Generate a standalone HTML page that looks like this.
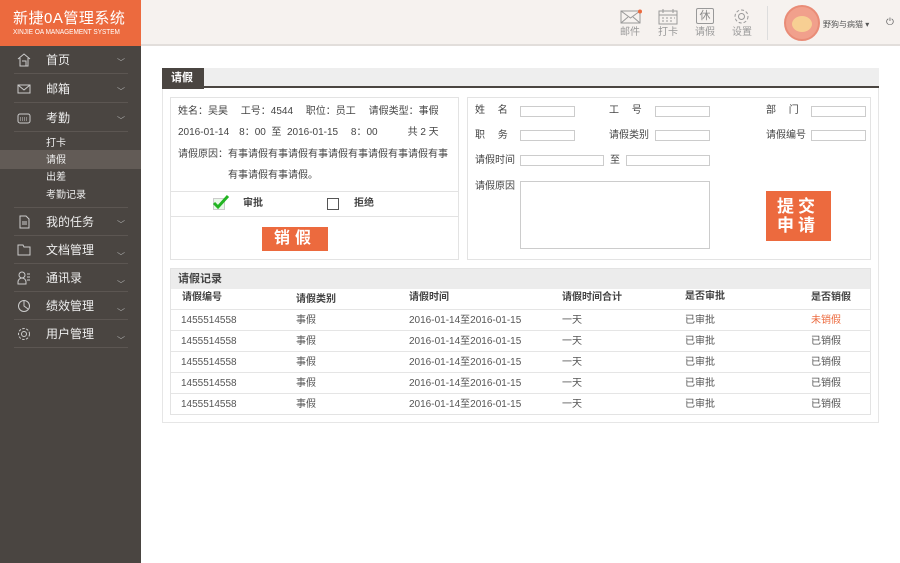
<!DOCTYPE html>
<html><head><meta charset="utf-8"><style>
*{margin:0;padding:0;box-sizing:border-box}
body{width:900px;height:563px;overflow:hidden;font-family:"Liberation Sans","Noto Sans CJK SC",sans-serif;font-size:10px;line-height:13px;color:#333;background:#fff;position:relative}
.a{position:absolute}
#side{left:0;top:0;width:141px;height:563px;background:#4a4541}
#logo{left:0;top:0;width:141px;height:46px;background:#ec6a3e;color:#fff}
#top{left:141px;top:0;width:759px;height:46px;background:#f6f2ef;border-bottom:2px solid #e2dedb}
.mi{position:absolute;left:0;width:141px;color:#eee;font-size:12px;line-height:15px}
.mi .t{position:absolute;left:46px}
.mi .ar{position:absolute;left:117px;color:#aaa;font-size:8px}
.sep{position:absolute;left:14px;width:114px;height:1px;background:#5c5652}
.sub{position:absolute;left:46px;color:#eee;font-size:10px}
.ic{position:absolute;left:17px;width:14px;height:14px}
.box{position:absolute;border:1px solid #e3e3e3;background:#fff}
.inp{position:absolute;border:1px solid #ccc;height:11px;background:#fff}
.lb{position:absolute;font-size:10px;color:#444}
.row{position:absolute;left:0;width:700px;height:21px;border-bottom:1px solid #e5e5e5}
.row span{position:absolute;top:4px;font-size:10px;color:#555;line-height:13px}
.tic{position:absolute;text-align:center;color:#999;font-size:10px}
</style></head><body>
<div id="side" class="a"></div>
<div id="logo" class="a">
<div class="a" style="left:13px;top:10px;font-size:15px;line-height:18px;letter-spacing:0.5px">新捷0A管理系统</div>
<div class="a" style="left:13px;top:29px;font-size:7px;line-height:8px;white-space:nowrap;transform:scaleX(.92);transform-origin:left">XINJIE OA MANAGEMENT SYSTEM</div>
</div>
<div id="top" class="a">
<svg class="a" style="left:479px;top:9px" width="22" height="16"><rect x="1" y="2" width="19" height="12" fill="none" stroke="#999"/><path d="M1 2l9.5 7 9.5-7M1 14l7-6M20 14l-7-6" fill="none" stroke="#999"/><circle cx="20" cy="2.5" r="2" fill="#ec6a3e"/></svg>
<div class="tic" style="left:476px;top:26px;width:26px">邮件</div>
<svg class="a" style="left:517px;top:9px" width="20" height="16"><rect x="1" y="2" width="18" height="13" fill="none" stroke="#999"/><path d="M1 6h18M5 0v4M15 0v4" stroke="#999"/><path d="M4 9h2M8 9h2M12 9h2M16 9h1M4 12h2M8 12h2M12 12h2" stroke="#999"/></svg>
<div class="tic" style="left:514px;top:26px;width:26px">打卡</div>
<div class="a" style="left:555px;top:8px;width:18px;height:16px;border:1px solid #999;border-radius:2px;color:#888;font-size:11px;text-align:center;line-height:14px">休</div>
<div class="tic" style="left:551px;top:26px;width:26px">请假</div>
<svg class="a" style="left:592px;top:8px" width="17" height="17"><circle cx="8.5" cy="8.5" r="3" fill="none" stroke="#999"/><circle cx="8.5" cy="8.5" r="6.5" fill="none" stroke="#999" stroke-dasharray="3 2"/></svg>
<div class="tic" style="left:588px;top:26px;width:26px">设置</div>
<div class="a" style="left:626px;top:6px;width:1px;height:34px;background:#ddd"></div>
<div class="a" style="left:643px;top:5px;width:36px;height:36px;border-radius:50%;background:#f1a08c;border:2px solid #e98c77"></div>
<div class="a" style="left:651px;top:16px;width:20px;height:16px;border-radius:50%;background:#f7cf93"></div>
<div class="a" style="left:682px;top:18px;font-size:8px;color:#555">野狗与病猫 ▾</div>
<div class="a" style="left:745px;top:16px;font-size:10px;color:#666">⏻</div>
</div>
<!-- menu -->
<div class="mi" style="top:53px"><svg class="ic" viewBox="0 0 14 14"><path d="M1 6L7 1l6 5M3 5v8h8V5M5 8h4v5" fill="none" stroke="#ccc"/></svg><span class="t">首页</span><span class="ar" style="top:2px">﹀</span></div>
<div class="sep" style="top:73px"></div>
<div class="mi" style="top:82px"><svg class="ic" viewBox="0 0 14 14"><rect x="1" y="3" width="12" height="8" fill="none" stroke="#ccc"/><path d="M1 3l6 5 6-5" fill="none" stroke="#ccc"/></svg><span class="t">邮箱</span><span class="ar" style="top:2px">﹀</span></div>
<div class="sep" style="top:102px"></div>
<div class="mi" style="top:111px"><svg class="ic" viewBox="0 0 14 14"><rect x="1" y="3" width="12" height="9" rx="2" fill="none" stroke="#ccc"/><path d="M3 7h8M3 9h8" stroke="#ccc" stroke-dasharray="1 1"/></svg><span class="t">考勤</span><span class="ar" style="top:2px">﹀</span></div>
<div class="sep" style="top:131px"></div>
<div class="sub" style="top:137px">打卡</div>
<div class="a" style="left:0;top:150px;width:141px;height:19px;background:#625b56"></div>
<div class="sub" style="top:154px">请假</div>
<div class="sub" style="top:171px">出差</div>
<div class="sub" style="top:189px">考勤记录</div>
<div class="sep" style="top:207px"></div>
<div class="mi" style="top:215px"><svg class="ic" viewBox="0 0 14 14"><path d="M3 1h6l3 3v9H3z M5 7h5M5 9h5" fill="none" stroke="#ccc"/></svg><span class="t">我的任务</span><span class="ar" style="top:2px">﹀</span></div>
<div class="sep" style="top:235px"></div>
<div class="mi" style="top:243px"><svg class="ic" viewBox="0 0 14 14"><path d="M1 2h5l1 2h6v8H1z" fill="none" stroke="#ccc"/></svg><span class="t">文档管理</span><span class="ar" style="top:6px">﹀</span></div>
<div class="sep" style="top:263px"></div>
<div class="mi" style="top:271px"><svg class="ic" viewBox="0 0 14 14"><circle cx="5" cy="4" r="3" fill="none" stroke="#ccc"/><path d="M1 13v-2a4 4 0 018 0v2zM10 3h3M10 6h3M10 9h3" fill="none" stroke="#ccc"/></svg><span class="t">通讯录</span><span class="ar" style="top:6px">﹀</span></div>
<div class="sep" style="top:291px"></div>
<div class="mi" style="top:299px"><svg class="ic" viewBox="0 0 14 14"><circle cx="7" cy="7" r="5.5" fill="none" stroke="#ccc"/><path d="M7 1.5V7l4 3" fill="none" stroke="#ccc"/></svg><span class="t">绩效管理</span><span class="ar" style="top:6px">﹀</span></div>
<div class="sep" style="top:319px"></div>
<div class="mi" style="top:327px"><svg class="ic" viewBox="0 0 14 14"><circle cx="7" cy="7" r="2.5" fill="none" stroke="#ccc"/><circle cx="7" cy="7" r="5.5" fill="none" stroke="#ccc" stroke-dasharray="2.5 1.5"/></svg><span class="t">用户管理</span><span class="ar" style="top:6px">﹀</span></div>
<div class="sep" style="top:347px"></div>

<!-- main panel -->
<div class="box" style="left:162px;top:68px;width:717px;height:355px;border-color:#e6e6e6"></div>
<div class="a" style="left:162px;top:68px;width:717px;height:20px;background:#eeeeee;border-bottom:2px solid #4a4541"></div>
<div class="a" style="left:162px;top:68px;width:42px;height:21px;background:#4a4541;color:#fff;font-size:11px;font-weight:bold;padding:4px 0 0 9px">请假</div>

<div class="box" style="left:170px;top:97px;width:289px;height:163px"></div>
<div class="lb" style="left:178px;top:105px">姓名：吴昊　 工号：4544　 职位：员工　 请假类型：事假</div>
<div class="lb" style="left:178px;top:126px">2016-01-14　8：00 &nbsp;至 &nbsp;2016-01-15　 8：00　　　共 2 天</div>
<div class="lb" style="left:178px;top:148px">请假原因：有事请假有事请假有事请假有事请假有事请假有事</div>
<div class="lb" style="left:228px;top:169px">有事请假有事请假。</div>
<div class="a" style="left:171px;top:191px;width:287px;height:1px;background:#e3e3e3"></div>
<div class="a" style="left:171px;top:216px;width:287px;height:1px;background:#e3e3e3"></div>
<div class="a" style="left:213px;top:198px;width:12px;height:12px;border:1px solid #ccc;background:#e8f8e8"></div>
<svg class="a" style="left:212px;top:194px" width="18" height="16"><path d="M2 9l4 4 10-11" fill="none" stroke="#22b422" stroke-width="3"/></svg>
<div class="lb" style="left:243px;top:197px;font-weight:bold">审批</div>
<div class="a" style="left:327px;top:198px;width:12px;height:12px;border:1px solid #555"></div>
<div class="lb" style="left:354px;top:197px;font-weight:bold">拒绝</div>
<div class="a" style="left:262px;top:227px;width:66px;height:24px;background:#ec6a3e;color:#fff;font-size:16px;font-weight:bold;text-align:center;line-height:24px;letter-spacing:5px">销假</div>

<div class="box" style="left:467px;top:97px;width:404px;height:163px"></div>
<div class="lb" style="left:475px;top:104px">姓　 名</div><div class="inp" style="left:520px;top:106px;width:55px"></div>
<div class="lb" style="left:609px;top:104px">工　 号</div><div class="inp" style="left:655px;top:106px;width:55px"></div>
<div class="lb" style="left:766px;top:104px">部　 门</div><div class="inp" style="left:811px;top:106px;width:55px"></div>
<div class="lb" style="left:475px;top:129px">职　 务</div><div class="inp" style="left:520px;top:130px;width:55px"></div>
<div class="lb" style="left:609px;top:129px">请假类别</div><div class="inp" style="left:655px;top:130px;width:55px"></div>
<div class="lb" style="left:766px;top:129px">请假编号</div><div class="inp" style="left:811px;top:130px;width:55px"></div>
<div class="lb" style="left:475px;top:154px">请假时间</div><div class="inp" style="left:520px;top:155px;width:84px"></div>
<div class="lb" style="left:610px;top:154px">至</div><div class="inp" style="left:626px;top:155px;width:84px"></div>
<div class="lb" style="left:475px;top:180px">请假原因</div><div class="inp" style="left:520px;top:181px;width:190px;height:68px"></div>
<div class="a" style="left:766px;top:191px;width:65px;height:50px;background:#ec6a3e;color:#fff;font-size:17px;font-weight:bold;line-height:19px;padding:6px 0 0 11px;letter-spacing:4px">提交<br>申请</div>

<div class="box" style="left:170px;top:268px;width:701px;height:147px"></div>
<div class="a" style="left:171px;top:269px;width:699px;height:20px;background:#ececec;font-size:11px;font-weight:bold;padding:4px 0 0 7px;color:#444">请假记录</div>
<div class="a" style="left:171px;top:289px;width:699px;height:21px;background:#fff;border-bottom:1px solid #e5e5e5;font-weight:bold;font-size:10px;color:#444">
<span class="a" style="left:11px;top:2px">请假编号</span><span class="a" style="left:125px;top:4px">请假类别</span><span class="a" style="left:238px;top:2px">请假时间</span><span class="a" style="left:391px;top:2px">请假时间合计</span><span class="a" style="left:514px;top:1px">是否审批</span><span class="a" style="left:640px;top:2px">是否销假</span></div>
<div class="a" style="left:171px;top:310px;width:699px;height:105px">
<div class="row" style="top:0"><span style="left:10px">1455514558</span><span style="left:125px">事假</span><span style="left:238px">2016-01-14至2016-01-15</span><span style="left:391px">一天</span><span style="left:514px">已审批</span><span style="left:640px;color:#ec6a3e">未销假</span></div>
<div class="row" style="top:21px"><span style="left:10px">1455514558</span><span style="left:125px">事假</span><span style="left:238px">2016-01-14至2016-01-15</span><span style="left:391px">一天</span><span style="left:514px">已审批</span><span style="left:640px">已销假</span></div>
<div class="row" style="top:42px"><span style="left:10px">1455514558</span><span style="left:125px">事假</span><span style="left:238px">2016-01-14至2016-01-15</span><span style="left:391px">一天</span><span style="left:514px">已审批</span><span style="left:640px">已销假</span></div>
<div class="row" style="top:63px"><span style="left:10px">1455514558</span><span style="left:125px">事假</span><span style="left:238px">2016-01-14至2016-01-15</span><span style="left:391px">一天</span><span style="left:514px">已审批</span><span style="left:640px">已销假</span></div>
<div class="row" style="top:84px;border:none"><span style="left:10px">1455514558</span><span style="left:125px">事假</span><span style="left:238px">2016-01-14至2016-01-15</span><span style="left:391px">一天</span><span style="left:514px">已审批</span><span style="left:640px">已销假</span></div>
</div>
</body></html>
